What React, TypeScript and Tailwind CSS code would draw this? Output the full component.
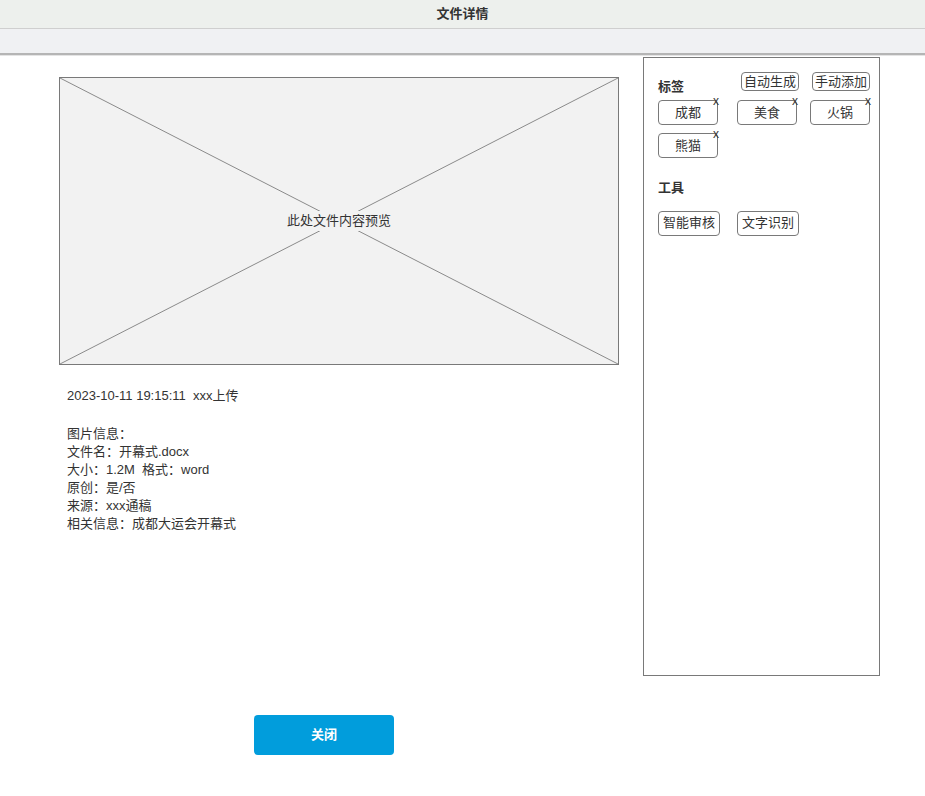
import React from "react";

const font = { fontFamily: '"Liberation Sans", "Noto Sans CJK SC", sans-serif' };

const Chip: React.FC<{ label: string; className?: string }> = ({ label, className }) => (
  <div
    className={
      "relative flex h-[25px] w-[60px] shrink-0 items-center justify-center rounded-[4px] border border-[#797979] bg-white text-[13px] text-[#333] " +
      (className ?? "")
    }
  >
    {label}
    <span className="absolute right-[-2px] top-[-6px] text-[12px] leading-none text-[#333]">x</span>
  </div>
);

const SmallBtn: React.FC<{ label: string; className?: string }> = ({ label, className }) => (
  <div
    className={
      "flex h-[19px] w-[58px] shrink-0 items-center justify-center whitespace-nowrap rounded-[4px] border border-[#797979] bg-white text-[13px] text-[#333] " +
      (className ?? "")
    }
  >
    {label}
  </div>
);

const ToolBtn: React.FC<{ label: string; className?: string }> = ({ label, className }) => (
  <div
    className={
      "flex h-[25px] w-[62px] shrink-0 items-center justify-center whitespace-nowrap rounded-[4px] border border-[#797979] bg-white text-[13px] text-[#333] " +
      (className ?? "")
    }
  >
    {label}
  </div>
);

export default function App() {
  const info = [
    "图片信息：",
    "文件名：开幕式.docx",
    "大小：1.2M  格式：word",
    "原创：是/否",
    "来源：xxx通稿",
    "相关信息：成都大运会开幕式",
  ];

  return (
    <div className="min-h-[796px] w-[925px] bg-white text-[#333]" style={font}>
      {/* header */}
      <div className="flex h-[29px] items-center justify-center border-b border-[#cfcfcf] bg-[#edf0ed] text-[13px] font-bold text-[#333]">
        文件详情
      </div>
      <div className="h-[26px] border-b-2 border-[#b5b5b5] bg-[#f0f1f3]" />
      <div className="h-px bg-[#e4e4e4]" />
      <div className="h-px" />

      <div className="flex">
        {/* left column */}
        <div className="ml-[59px] w-[560px] shrink-0 pt-[20px]">
          <div className="relative h-[288px] w-[560px] border border-[#797979] bg-[#f2f2f2]">
            <svg className="absolute inset-0 h-full w-full" viewBox="0 0 558 286" preserveAspectRatio="none">
              <line x1="0" y1="0" x2="558" y2="286" stroke="#8a8a8a" strokeWidth="1" />
              <line x1="558" y1="0" x2="0" y2="286" stroke="#8a8a8a" strokeWidth="1" />
            </svg>
            <div className="absolute inset-0 flex items-center justify-center">
              <span className="bg-[#f2f2f2] px-[2px] text-[13px] text-[#333]">此处文件内容预览</span>
            </div>
          </div>

          <div className="ml-[8px] mt-[22px] text-[13px] leading-[18px] text-[#333]">
            <div className="whitespace-pre">2023-10-11 19:15:11  xxx上传</div>
            <div className="h-[20px]" />
            {info.map((t) => (
              <div key={t} className="whitespace-pre">
                {t}
              </div>
            ))}
          </div>
        </div>

        {/* right panel */}
        <div className="ml-[24px] h-[619px] w-[237px] shrink-0 border border-[#797979] px-[14px] pt-[14px]">
          <div className="flex items-start">
            <div className="mt-[8px] shrink-0 whitespace-nowrap text-[13px] font-bold leading-[13px]">标签</div>
            <SmallBtn label="自动生成" className="ml-[57px]" />
            <SmallBtn label="手动添加" className="ml-[13px]" />
          </div>
          <div className="mt-[7px] flex">
            <Chip label="成都" />
            <Chip label="美食" className="ml-[19px]" />
            <Chip label="火锅" className="ml-[13px]" />
          </div>
          <div className="mt-[8px] flex">
            <Chip label="熊猫" />
          </div>

          <div className="mt-[20px] text-[13px] font-bold">工具</div>
          <div className="mt-[13px] flex">
            <ToolBtn label="智能审核" />
            <ToolBtn label="文字识别" className="ml-[17px]" />
          </div>
        </div>
      </div>

      <div className="ml-[254px] mt-[39px] flex h-[40px] w-[140px] items-center justify-center rounded-[4px] bg-[#019ddc] text-[13px] font-bold text-white">
        关闭
      </div>
    </div>
  );
}
